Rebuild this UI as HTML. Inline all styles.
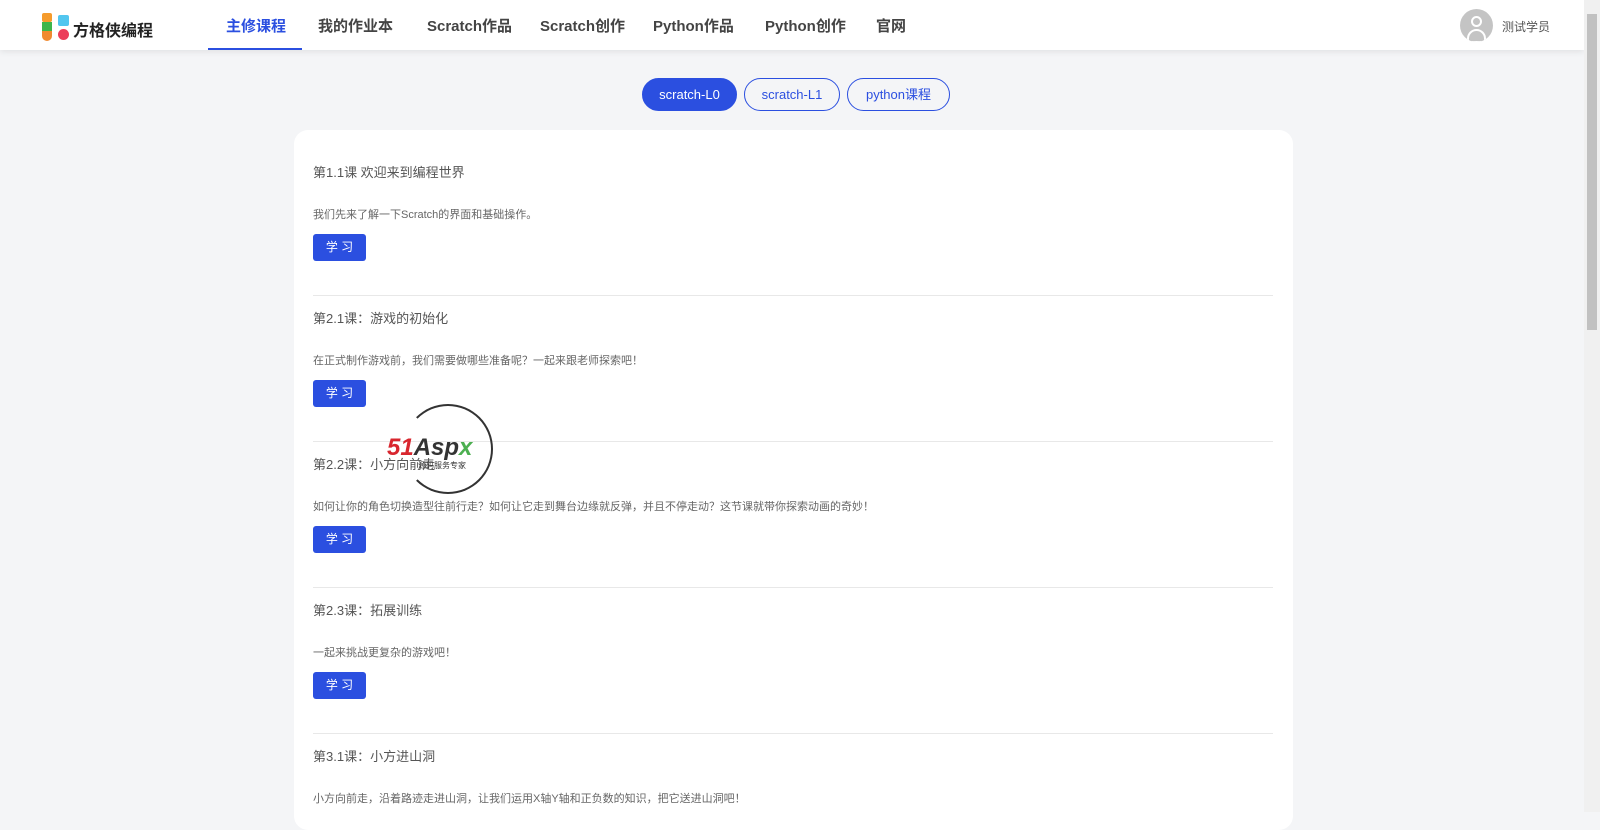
<!DOCTYPE html>
<html><head><meta charset="utf-8"><style>
*{margin:0;padding:0;box-sizing:border-box}
body{width:1600px;height:812px;overflow:hidden;background:#f4f5f7;font-family:"Liberation Sans","Noto Sans CJK SC",sans-serif;position:relative}
.nav{position:absolute;left:0;top:0;width:1584px;height:50px;background:#fff;box-shadow:0 2px 6px rgba(0,0,0,.08)}
.nav a{position:absolute;top:15px;font-size:15px;color:#444;font-weight:bold;white-space:nowrap}
.sb{position:absolute;right:0;top:0;width:16px;height:812px;background:#f0f0f0}
.sb div{position:absolute;left:3px;top:14px;width:10px;height:316px;background:#c1c1c1}
.tab{position:absolute;top:78px;height:33px;border:1px solid #2b4fe0;border-radius:17px;font-size:13px;color:#2b4fe0;text-align:center;line-height:31px}
.card{position:absolute;left:294px;top:130px;width:999px;height:700px;background:#fff;border-radius:14px}
.t{position:absolute;left:19px;font-size:13px;color:#555}
.d{position:absolute;left:19px;font-size:11px;color:#666}
.b{position:absolute;left:19px;width:53px;height:27px;background:#2b4fe0;border-radius:3px;color:#fff;font-size:12px;text-align:center;line-height:27px}
.hr{position:absolute;left:19px;width:960px;height:1px;background:#e8e8e8}
</style></head><body>
<div class="nav">
<div style="position:absolute;left:42px;top:13px;width:10px;height:9px;background:#f59b2c;border-radius:2px"></div>
<div style="position:absolute;left:42px;top:22px;width:10px;height:9px;background:#3db54a"></div>
<div style="position:absolute;left:42px;top:31px;width:10px;height:10px;background:#f08a30;border-radius:0 0 5px 5px"></div>
<div style="position:absolute;left:58px;top:15px;width:11px;height:11px;background:#52c6ef;border-radius:2px"></div>
<div style="position:absolute;left:58px;top:29px;width:11px;height:11px;background:#ec3d5a;border-radius:50%"></div>
<div style="position:absolute;left:73px;top:17px;font-size:16px;font-weight:bold;color:#222">方格侠编程</div>
<a style="left:226px;color:#2b4fe0">主修课程</a>
<div style="position:absolute;left:208px;top:48px;width:94px;height:2px;background:#2b4fe0"></div>
<a style="left:318px">我的作业本</a>
<a style="left:427px">Scratch作品</a>
<a style="left:540px">Scratch创作</a>
<a style="left:653px">Python作品</a>
<a style="left:765px">Python创作</a>
<a style="left:876px">官网</a>
<div style="position:absolute;left:1460px;top:9px;width:33px;height:33px;border-radius:50%;background:#c4c4c4;overflow:hidden">
<div style="position:absolute;left:11px;top:7px;width:11px;height:11px;border:2px solid #fff;border-radius:50%"></div>
<div style="position:absolute;left:7px;top:20px;width:19px;height:14px;border:2px solid #fff;border-radius:10px 10px 0 0"></div></div>
<div style="position:absolute;left:1502px;top:18px;font-size:12px;color:#555">测试学员</div>
</div>
<div class="sb"><div></div></div>
<div class="tab" style="left:642px;width:95px;background:#2b4fe0;color:#fff">scratch-L0</div>
<div class="tab" style="left:744px;width:96px">scratch-L1</div>
<div class="tab" style="left:847px;width:103px">python课程</div>
<div class="card">
<div class="t" style="top:32px">第1.1课 欢迎来到编程世界</div>
<div class="d" style="top:76px">我们先来了解一下Scratch的界面和基础操作。</div>
<div class="b" style="top:104px">学 习</div>
<div class="hr" style="top:165px"></div>
<div class="t" style="top:178px">第2.1课：游戏的初始化</div>
<div class="d" style="top:222px">在正式制作游戏前，我们需要做哪些准备呢？一起来跟老师探索吧！</div>
<div class="b" style="top:250px">学 习</div>
<div class="hr" style="top:311px"></div>
<div class="t" style="top:324px">第2.2课：小方向前走</div>
<div class="d" style="top:368px">如何让你的角色切换造型往前行走？如何让它走到舞台边缘就反弹，并且不停走动？这节课就带你探索动画的奇妙！</div>
<div class="b" style="top:396px">学 习</div>
<div class="hr" style="top:457px"></div>
<div class="t" style="top:470px">第2.3课：拓展训练</div>
<div class="d" style="top:514px">一起来挑战更复杂的游戏吧！</div>
<div class="b" style="top:542px">学 习</div>
<div class="hr" style="top:603px"></div>
<div class="t" style="top:616px">第3.1课：小方进山洞</div>
<div class="d" style="top:660px">小方向前走，沿着路迹走进山洞，让我们运用X轴Y轴和正负数的知识，把它送进山洞吧！</div>
</div>
<div style="position:absolute;left:403px;top:404px;width:90px;height:90px;border:2px solid #333;border-radius:50%;border-left-color:transparent"></div>
<div style="position:absolute;left:387px;top:434px;font-size:24px;font-weight:bold;font-style:italic;color:#333;white-space:nowrap"><span style="color:#d8262e">51</span>Asp<span style="color:#4caf50">x</span></div>
<div style="position:absolute;left:418px;top:460px;font-size:8px;color:#333">源码服务专家</div>
</body></html>
